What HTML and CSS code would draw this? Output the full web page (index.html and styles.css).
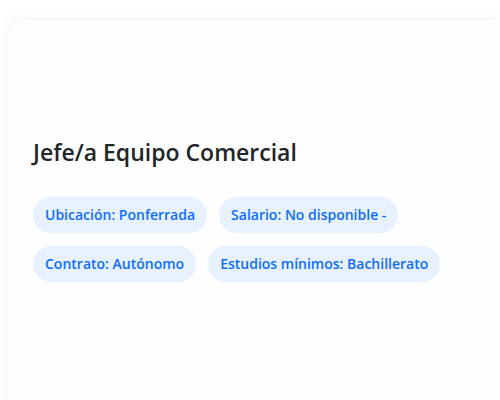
FILE: index.html
```html
<!DOCTYPE html>
<html lang="es">
<head>
<meta charset="utf-8">
<link rel="stylesheet" href="styles.css">
</head>
<body>
<div class="card">
  <h4 class="title">Jefe/a Equipo Comercial</h4>
  <div class="tags">
    <span class="tag">Ubicación: Ponferrada</span>
    <span class="tag">Salario: No disponible -</span>
    <span class="tag">Contrato: Autónomo</span>
    <span class="tag">Estudios mínimos: Bachillerato</span>
  </div>
</div>
</body>
</html>
```
FILE: styles.css
```css
html, body {
  margin: 0;
  background: #ffffff;
  overflow: hidden;
}
body {
  width: 500px;
  height: 400px;
  box-sizing: border-box;
  padding: 20px 0 0 8px;
  font-family: "Open Sans", "Noto Sans", sans-serif;
}
.card {
  width: 492px;
  height: 380px;
  box-sizing: border-box;
  background: #fefefe;
  border-radius: 16px 0 0 0;
  box-shadow: 0 0 16px rgba(0, 0, 0, 0.06);
  padding: 117px 24px 24px 25px;
}
.title {
  margin: 0 0 30px;
  font-size: 23px;
  font-weight: 600;
  line-height: 30px;
  color: #212529;
}
.tags {
  display: flex;
  flex-wrap: wrap;
  gap: 13px 12px;
  width: 420px;
}
.tag {
  display: inline-block;
  background: #e7f1ff;
  color: #0d6efd;
  font-size: 14px;
  font-weight: 600;
  line-height: 20px;
  padding: 8px 12px;
  border-radius: 18px;
}
```
